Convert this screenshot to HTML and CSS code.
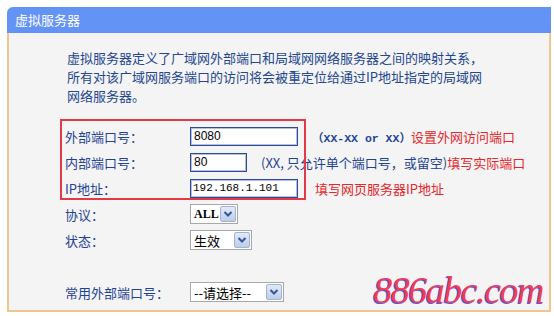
FILE: index.html
```html
<!DOCTYPE html>
<html lang="zh-CN">
<head>
    <meta charset="UTF-8">
    <title>虚拟服务器</title>
    <link rel="stylesheet" href="styles.css">
</head>
<body>
    <div class="panel">
        <div class="panel-title">虚拟服务器</div>
        <div class="panel-body">
            <p class="intro">虚拟服务器定义了广域网外部端口和局域网网络服务器之间的映射关系，<br>所有对该广域网服务端口的访问将会被重定位给通过IP地址指定的局域网<br>网络服务器。</p>

            <div class="form">
                <div class="row">
                    <label class="label" for="extPort">外部端口号：</label>
                    <input type="text" class="field wide" id="extPort" value="8080">
                    <span class="hint"><span class="mono">（XX-XX or XX）</span></span>
                    <span class="note">设置外网访问端口</span>
                </div>
                <div class="row">
                    <label class="label" for="intPort">内部端口号：</label>
                    <input type="text" class="field short" id="intPort" value="80">
                    <span class="hint">(XX, 只允许单个端口号，或留空)</span>
                    <span class="note">填写实际端口</span>
                </div>
                <div class="row">
                    <label class="label" for="ipAddr">IP地址：</label>
                    <input type="text" class="field wide ip" id="ipAddr" value="192.168.1.101">
                    <span class="note gap">填写网页服务器IP地址</span>
                </div>
                <div class="row">
                    <span class="label">协议：</span>
                    <div class="select sel-proto"><span class="select-text latin">ALL</span><i class="arrow"><svg width="10" height="8" viewBox="0 0 10 8"><polyline points="1.5,2 5,5.5 8.5,2" fill="none" stroke="#35569a" stroke-width="2"/></svg></i></div>
                </div>
                <div class="row">
                    <span class="label">状态：</span>
                    <div class="select sel-state"><span class="select-text">生效</span><i class="arrow"><svg width="10" height="8" viewBox="0 0 10 8"><polyline points="1.5,2 5,5.5 8.5,2" fill="none" stroke="#35569a" stroke-width="2"/></svg></i></div>
                </div>
                <div class="row"></div>
                <div class="row">
                    <span class="label">常用外部端口号：</span>
                    <div class="select sel-common"><span class="select-text">--请选择--</span><i class="arrow"><svg width="10" height="8" viewBox="0 0 10 8"><polyline points="1.5,2 5,5.5 8.5,2" fill="none" stroke="#35569a" stroke-width="2"/></svg></i></div>
                </div>

                <div class="mark"></div>
            </div>

            <div class="watermark">886abc.com</div>
        </div>
    </div>
</body>
</html>
```

FILE: styles.css
```css
body {
    margin: 0;
    background: #fff;
    font-family: "Noto Sans CJK SC", "Liberation Sans", sans-serif;
    font-size: 13px;
    color: #1f4394;
}

.panel {
    margin: 7px 3px 0 7px;
}

.panel-title {
    height: 26px;
    line-height: 26px;
    padding-left: 8px;
    background-color: #6393f4;
    color: #fff;
    border-top-left-radius: 6px;
    font-size: 13px;
}

.panel-body {
    position: relative;
    height: 279px;
    padding: 15px 0 0 56px;
    box-sizing: border-box;
    background-color: #f4f4f4;
    border: 2px solid #f2c48e;
    border-top: none;
}

.intro {
    margin: 0 0 18px 2px;
    line-height: 19px;
    color: #23468f;
}

.form {
    position: relative;
}

.row {
    display: flex;
    align-items: center;
    height: 26px;
}

.label {
    width: 125px;
    flex-shrink: 0;
    color: #1f4394;
}

.field {
    height: 19px;
    box-sizing: border-box;
    border: 1px solid #2a4a9e;
    box-shadow: inset 0 0 0 1px rgba(42, 74, 158, 0.35);
    padding: 0 3px;
    margin: 0;
    background: #fff;
    font-family: "Liberation Sans", sans-serif;
    font-size: 12px;
    color: #000;
    outline: none;
}

.field.wide {
    width: 108px;
}

.field.short {
    width: 57px;
}

.field.ip {
    font-family: "Liberation Mono", monospace;
    font-size: 11px;
    padding-left: 2px;
}

.hint {
    margin-left: 14px;
    white-space: nowrap;
    color: #1f4394;
}

.mono {
    font-family: "Liberation Mono", "Noto Sans CJK SC", monospace;
    font-size: 11.5px;
    font-weight: bold;
}

.note {
    white-space: nowrap;
    color: #e8262c;
}

.note.gap {
    margin-left: 17px;
}

.select {
    display: flex;
    align-items: center;
    justify-content: space-between;
    height: 20px;
    box-sizing: border-box;
    border: 1px solid #a8a8a8;
    background: #fff;
    color: #000;
}

.select-text {
    padding-left: 3px;
    white-space: nowrap;
}

.select-text.latin {
    font-family: "Liberation Serif", serif;
    font-weight: bold;
    font-size: 12px;
}

.sel-proto {
    width: 48px;
}

.sel-state {
    width: 62px;
}

.sel-common {
    width: 94px;
}

.arrow {
    display: flex;
    align-items: center;
    justify-content: center;
    width: 16px;
    height: 16px;
    margin-right: 1px;
    box-sizing: border-box;
    border: 1px solid #9fb4d8;
    border-radius: 2px;
    background: linear-gradient(#e2eaf7, #bccde9);
}

.mark {
    position: absolute;
    left: -5px;
    top: -4px;
    width: 246px;
    height: 81px;
    box-sizing: border-box;
    border: 2px solid #e23a46;
    pointer-events: none;
}

.watermark {
    position: absolute;
    right: 6px;
    bottom: 0;
    font-family: "Liberation Serif", serif;
    font-style: italic;
    font-size: 38px;
    letter-spacing: -1.5px;
    line-height: 40px;
    color: #f23c55;
    text-shadow: -1px 1px 0 #4a5cf0;
}
```
